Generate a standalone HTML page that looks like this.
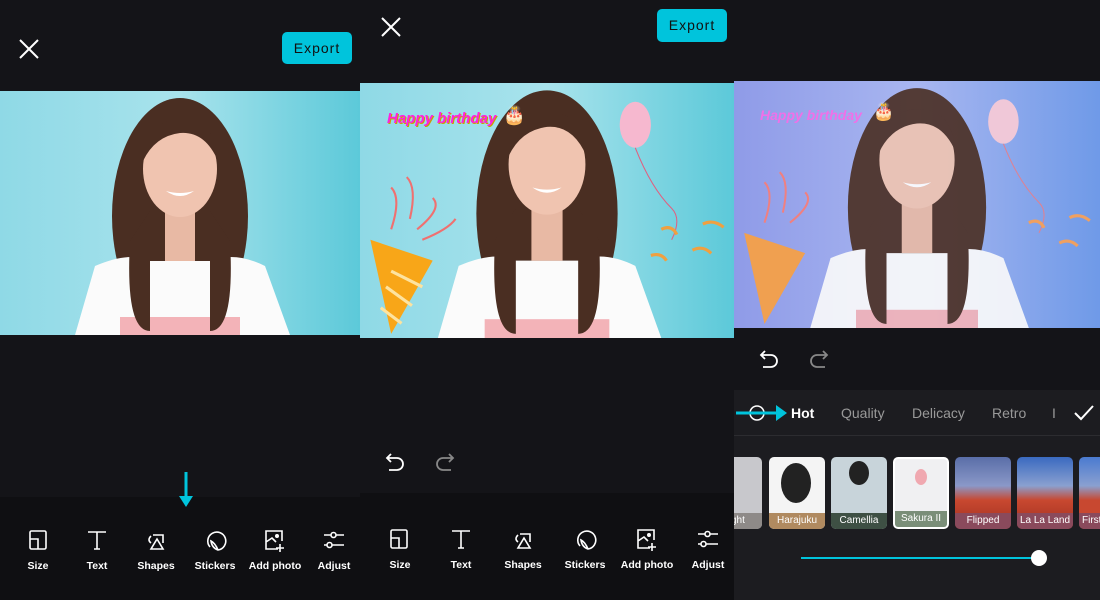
<!DOCTYPE html><html><head><style>
*{margin:0;padding:0;box-sizing:border-box}
body{width:1100px;height:600px;background:#141418;position:relative;overflow:hidden;font-family:"Liberation Sans",sans-serif}
.p{position:absolute;top:0;height:600px;overflow:hidden}
.abs{position:absolute}
.exp{position:absolute;background:#00c4dc;color:#111;font-size:14px;letter-spacing:1px;border-radius:5px;text-align:center}
.tb{position:absolute;background:#0f0f12;left:0;right:0;bottom:0}
.tool{position:absolute;width:70px;text-align:center;color:#fff;font-size:10.5px;font-weight:bold}
.f{position:absolute;top:457px;width:56px;height:72px;border-radius:5px;overflow:hidden}
.f span{position:absolute;bottom:0;left:0;right:0;height:16px;color:#fff;font-size:10px;text-align:center;line-height:16px}
</style></head><body>
<svg width="0" height="0" style="position:absolute"><defs>
<g id="person">
<ellipse cx="180" cy="125" rx="68" ry="118" fill="#4a2e22"/>
<path d="M75 244 L95 175 Q130 160 150 170 L210 170 Q235 160 265 175 L290 244Z" fill="#fbfbfb"/>
<rect x="120" y="226" width="120" height="20" fill="#f3b3b8"/>
<path d="M130 150 Q125 240 150 240 L150 120Z M230 150 Q235 240 210 240 L210 120Z" fill="#4a2e22"/>
<rect x="165" y="115" width="30" height="55" fill="#e8b9a4"/>
<ellipse cx="180" cy="78" rx="37" ry="48" fill="#f0c4b0"/>
<path d="M143 70 Q150 25 185 28 Q215 30 218 70 Q205 40 180 42 Q155 45 143 70Z" fill="#4a2e22"/>
<path d="M166 100 Q180 110 194 100 Q180 104 166 100Z" fill="#fff"/>
</g>
<g id="i1" fill="none" stroke="#fff" stroke-width="1.6"><rect x="1" y="0" width="16" height="18" rx="1.5"/><path d="M1 8H9V18"/></g>
<g id="i2" fill="none" stroke="#fff" stroke-width="1.6"><path d="M0 1H18M9 1V18M6 18H12"/></g>
<g id="i3" fill="none" stroke="#fff" stroke-width="1.6"><path d="M6 4H16V12M4 5Q0 9 4 12M10 8L4 18H16Z"/></g>
<g id="i4" fill="none" stroke="#fff" stroke-width="1.6"><path d="M4 16A9 9 0 1 1 12 19Q6 17 5 10Q9 12 12 19"/></g>
<g id="i5" fill="none" stroke="#fff" stroke-width="1.6"><path d="M16 10V0H0V18H12M0 11L6 7L10 11M14 13V21M10 17H18"/><circle cx="11" cy="5" r="1.2" fill="#fff"/></g>
<g id="i6" fill="none" stroke="#fff" stroke-width="1.6"><path d="M0 4H7M12 4H20M0 14H3M8 14H20"/><circle cx="9.5" cy="4" r="2.5"/><circle cx="5.5" cy="14" r="2.5"/></g>
</defs></svg>

<!-- Panel 1 -->
<div class="p" style="left:0;width:360px;background:#141418">
<svg class="abs" style="left:18px;top:38px" width="22" height="22"><path d="M2 2L20 20M20 2L2 20" stroke="#fff" stroke-width="2"/></svg>
<div class="exp" style="left:282px;top:32px;width:70px;height:32px;line-height:32px">Export</div>
<svg class="abs" style="left:0;top:91px" width="360" height="244" viewBox="0 0 360 244" preserveAspectRatio="none">
<defs><linearGradient id="g1" x1="0" x2="1"><stop offset="0" stop-color="#8fd9e6"/><stop offset="0.5" stop-color="#a8e3ec"/><stop offset="1" stop-color="#5cc9d9"/></linearGradient></defs>
<rect width="360" height="244" fill="url(#g1)"/><use href="#person"/></svg>
<div class="tb" style="top:497px"></div>
<svg class="abs" style="left:176px;top:472px" width="20" height="36"><path d="M10 0V28" stroke="#00c4dc" stroke-width="3"/><path d="M3 24L10 35L17 24Z" fill="#00c4dc"/></svg>
<svg class="abs" style="left:0;top:0" width="360" height="600">
<use href="#i1" x="29" y="531"/><use href="#i2" x="88" y="531"/><use href="#i3" x="147" y="531"/><use href="#i4" x="206" y="531"/><use href="#i5" x="266" y="531"/><use href="#i6" x="324" y="531"/></svg>
<div class="tool" style="left:3px;top:560px">Size</div><div class="tool" style="left:62px;top:560px">Text</div><div class="tool" style="left:121px;top:560px">Shapes</div><div class="tool" style="left:180px;top:560px">Stickers</div><div class="tool" style="left:240px;top:560px">Add photo</div><div class="tool" style="left:299px;top:560px">Adjust</div>
</div>

<!-- Panel 2 -->
<div class="p" style="left:360px;width:374px;background:#141418">
<svg class="abs" style="left:20px;top:16px" width="22" height="22"><path d="M2 2L20 20M20 2L2 20" stroke="#fff" stroke-width="2"/></svg>
<div class="exp" style="left:297px;top:9px;width:70px;height:33px;line-height:33px">Export</div>
<svg class="abs" style="left:0;top:83px" width="374" height="255" viewBox="0 0 360 244" preserveAspectRatio="none">
<rect width="360" height="244" fill="url(#g1)"/><use href="#person"/>
<path d="M30 240L70 170L10 150Z" fill="#f8a618"/>
<path d="M40 230L20 215M50 213L25 195M60 195L30 180" stroke="#fde3a0" stroke-width="3"/>
<path d="M30 140Q40 110 30 100M48 130Q55 100 45 90M55 140Q80 120 70 110M60 150Q85 140 92 130" stroke="#f07070" stroke-width="2" fill="none"/>
<ellipse cx="265" cy="40" rx="15" ry="22" fill="#f6b8cf"/>
<path d="M265 62Q280 100 300 120Q310 130 300 150" stroke="#e06080" fill="none"/>
<path d="M290 140q10 -5 15 5M330 135q10-5 20 3M320 160q10-5 18 3M280 165q10-3 15 5" stroke="#f0a040" stroke-width="3" fill="none"/>
</svg>
<div class="abs" style="left:27px;top:110px;font-size:15px;font-weight:bold;font-style:italic;color:#ff22dd;text-shadow:1px 1px 0 #c8a000">Happy birthday</div>
<div class="abs" style="left:143px;top:105px;font-size:18px">🎂</div>
<div class="tb" style="top:493px"></div>
<svg class="abs" style="left:25px;top:450px" width="70" height="24" fill="none" stroke-width="1.8"><path d="M6 4L2 8L6 12M2 8H12A6 6 0 0 1 12 20H4" stroke="#fff"/><path d="M64 4L68 8L64 12M68 8H58A6 6 0 0 0 58 20H66" stroke="#888"/></svg>
<svg class="abs" style="left:0;top:0" width="374" height="600">
<use href="#i1" x="30" y="530"/><use href="#i2" x="92" y="530"/><use href="#i3" x="154" y="530"/><use href="#i4" x="216" y="530"/><use href="#i5" x="278" y="530"/><use href="#i6" x="338" y="530"/></svg>
<div class="tool" style="left:5px;top:559px">Size</div><div class="tool" style="left:66px;top:559px">Text</div><div class="tool" style="left:128px;top:559px">Shapes</div><div class="tool" style="left:190px;top:559px">Stickers</div><div class="tool" style="left:252px;top:559px">Add photo</div><div class="tool" style="left:313px;top:559px">Adjust</div>
</div>

<!-- Panel 3 -->
<div class="p" style="left:734px;width:366px;background:#141418">
<svg class="abs" style="left:0;top:81px" width="366" height="247" viewBox="0 0 360 244" preserveAspectRatio="none">
<defs><linearGradient id="g3" x1="0" x2="1"><stop offset="0" stop-color="#8f9be8"/><stop offset="0.5" stop-color="#a8b6f0"/><stop offset="1" stop-color="#6f9ae8"/></linearGradient></defs>
<rect width="360" height="244" fill="url(#g3)"/><g opacity="0.9"><use href="#person"/></g>
<path d="M30 240L70 170L10 150Z" fill="#f0a050"/>
<path d="M30 140Q40 110 30 100M48 130Q55 100 45 90M55 140Q80 120 70 110" stroke="#f08080" stroke-width="2" fill="none"/>
<ellipse cx="265" cy="40" rx="15" ry="22" fill="#f0c8d8"/>
<path d="M265 62Q280 100 300 120Q310 130 300 150" stroke="#e08090" fill="none"/>
<path d="M290 140q10 -5 15 5M330 135q10-5 20 3M320 160q10-5 18 3" stroke="#f0a060" stroke-width="3" fill="none"/>
</svg>
<div class="abs" style="left:26px;top:107px;font-size:14px;font-weight:bold;font-style:italic;color:#f070e8">Happy birthday</div>
<div class="abs" style="left:139px;top:102px;font-size:17px">🎂</div>
<svg class="abs" style="left:25px;top:347px" width="70" height="24" fill="none" stroke-width="1.8"><path d="M6 4L2 8L6 12M2 8H12A6 6 0 0 1 12 20H4" stroke="#fff"/><path d="M64 4L68 8L64 12M68 8H58A6 6 0 0 0 58 20H66" stroke="#888"/></svg>
<div class="abs" style="left:0;top:390px;width:366px;height:210px;background:#1c1c20"></div>
<div class="abs" style="left:0;top:435px;width:366px;height:1px;background:#2c2c30"></div>
<svg class="abs" style="left:2px;top:400px" width="54" height="26"><circle cx="21" cy="13" r="7" fill="none" stroke="#fff" stroke-width="1.5"/><path d="M0 13H42" stroke="#00c4dc" stroke-width="3"/><path d="M40 5L51 13L40 21Z" fill="#00c4dc"/></svg>
<div class="abs" style="left:57px;top:405px;color:#fff;font-weight:bold;font-size:14px">Hot</div>
<div class="abs" style="left:107px;top:405px;color:#999;font-size:14px">Quality</div>
<div class="abs" style="left:178px;top:405px;color:#999;font-size:14px">Delicacy</div>
<div class="abs" style="left:258px;top:405px;color:#999;font-size:14px">Retro</div>
<div class="abs" style="left:318px;top:405px;color:#999;font-size:14px">I</div>
<svg class="abs" style="left:339px;top:404px" width="22" height="18"><path d="M2 9L8 15L20 2" stroke="#fff" stroke-width="2" fill="none"/></svg>
<div class="f" style="left:-28px;background:#c8c8cc"><span style="background:#8e8a88">Light</span></div>
<div class="f" style="left:35px;background:#f4f4f4"><div style="position:absolute;left:12px;top:6px;width:30px;height:40px;background:#222;border-radius:50%"></div><span style="background:#b08a60">Harajuku</span></div>
<div class="f" style="left:97px;background:#c8d4da"><div style="position:absolute;left:18px;top:4px;width:20px;height:24px;background:#222;border-radius:50%"></div><span style="background:#3e5044">Camellia</span></div>
<div class="f" style="left:159px;background:#f0f0f2;border:2px solid #fff"><div style="position:absolute;left:20px;top:10px;width:12px;height:16px;background:#f0a8b0;border-radius:50%"></div><span style="background:#7a8e78">Sakura II</span></div>
<div class="f" style="left:221px;background:linear-gradient(#5a6ea8 0,#8a98c8 40%,#c84830 60%,#a03020)"><span style="background:#8a4a5c">Flipped</span></div>
<div class="f" style="left:283px;background:linear-gradient(#3a6ac0 0,#8aa0d0 40%,#c84830 60%,#a03020)"><span style="background:#8a4a5c">La La Land</span></div>
<div class="f" style="left:345px;background:linear-gradient(#4a7ad0 0,#8aa0d0 40%,#c84830 60%)"><span style="background:#8a4a5c;text-align:left;padding-left:3px">First</span></div>
<div class="abs" style="left:67px;top:557px;width:238px;height:2px;background:#00c4dc"></div>
<div class="abs" style="left:297px;top:550px;width:16px;height:16px;border-radius:50%;background:#fff"></div>
</div>
</body></html>
